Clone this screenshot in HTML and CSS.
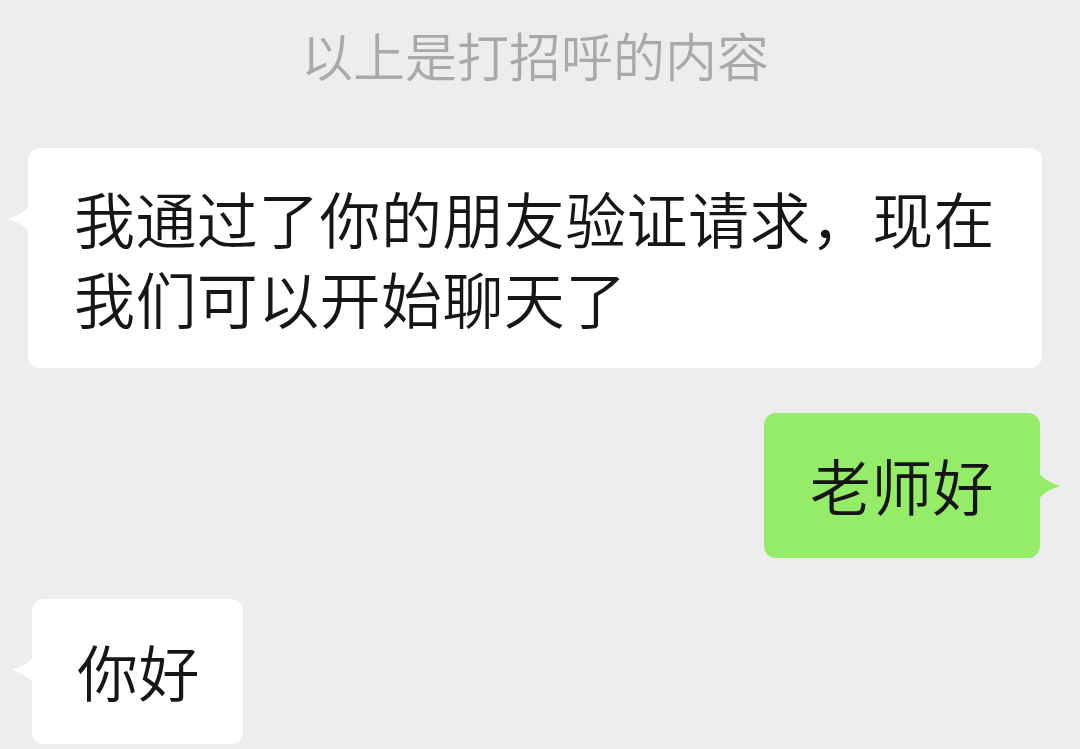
FILE: index.html
```html
<!DOCTYPE html>
<html lang="zh-CN">
<head>
<meta charset="utf-8">
<title>聊天</title>
<link rel="stylesheet" href="styles.css">
</head>
<body>
<main class="chat">
  <div class="sys">以上是打招呼的内容</div>
  <div class="row row-left row-first">
    <div class="bubble bubble-in">我通过了你的朋友验证请求，现在我们可以开始聊天了</div>
  </div>
  <div class="row row-right">
    <div class="bubble bubble-out">老师好</div>
  </div>
  <div class="row row-left row-last">
    <div class="bubble bubble-in">你好</div>
  </div>
</main>
</body>
</html>
```

FILE: styles.css
```css
html, body {
  margin: 0;
  padding: 0;
  background: #ededed;
}

body {
  width: 1080px;
  height: 749px;
  overflow: hidden;
  font-family: "Noto Sans CJK SC", "Noto Sans", sans-serif;
  font-weight: 350;
}

.chat {
  display: flex;
  flex-direction: column;
  padding: 24px 38px 0 28px;
}

.sys {
  text-align: center;
  font-size: 52px;
  line-height: 62px;
  color: #a9a9a9;
}

.row {
  display: flex;
}

.row-first {
  margin-top: 62px;
}

.row-left {
  justify-content: flex-start;
}

.row-right {
  justify-content: flex-end;
  padding-right: 2px;
  margin-top: 45px;
}

.row-last {
  padding-left: 4px;
  margin-top: 41px;
}

.bubble {
  position: relative;
  box-sizing: border-box;
  max-width: 1014px;
  padding: 30px 46px;
  border-radius: 12px;
  font-size: 61px;
  letter-spacing: 0.4px;
  line-height: 80px;
  color: #161616;
}

.row-right .bubble,
.row-last .bubble {
  padding-top: 32px;
  padding-bottom: 33px;
}

.row-last .bubble {
  padding-left: 45px;
  padding-right: 43px;
}

.bubble-in {
  background: #ffffff;
}

.bubble-out {
  background: #95ec69;
}

.bubble::before {
  content: "";
  position: absolute;
  top: 52px;
  width: 22px;
  height: 38px;
  background: inherit;
}

.bubble-in::before {
  left: -20px;
  clip-path: path("M22 0 C22 11 10 15 0 19 C10 23 22 27 22 38 Z");
}

.bubble-out::before {
  right: -20px;
  top: 54px;
  clip-path: path("M0 0 C0 11 12 15 22 19 C12 23 0 27 0 38 Z");
}
```
